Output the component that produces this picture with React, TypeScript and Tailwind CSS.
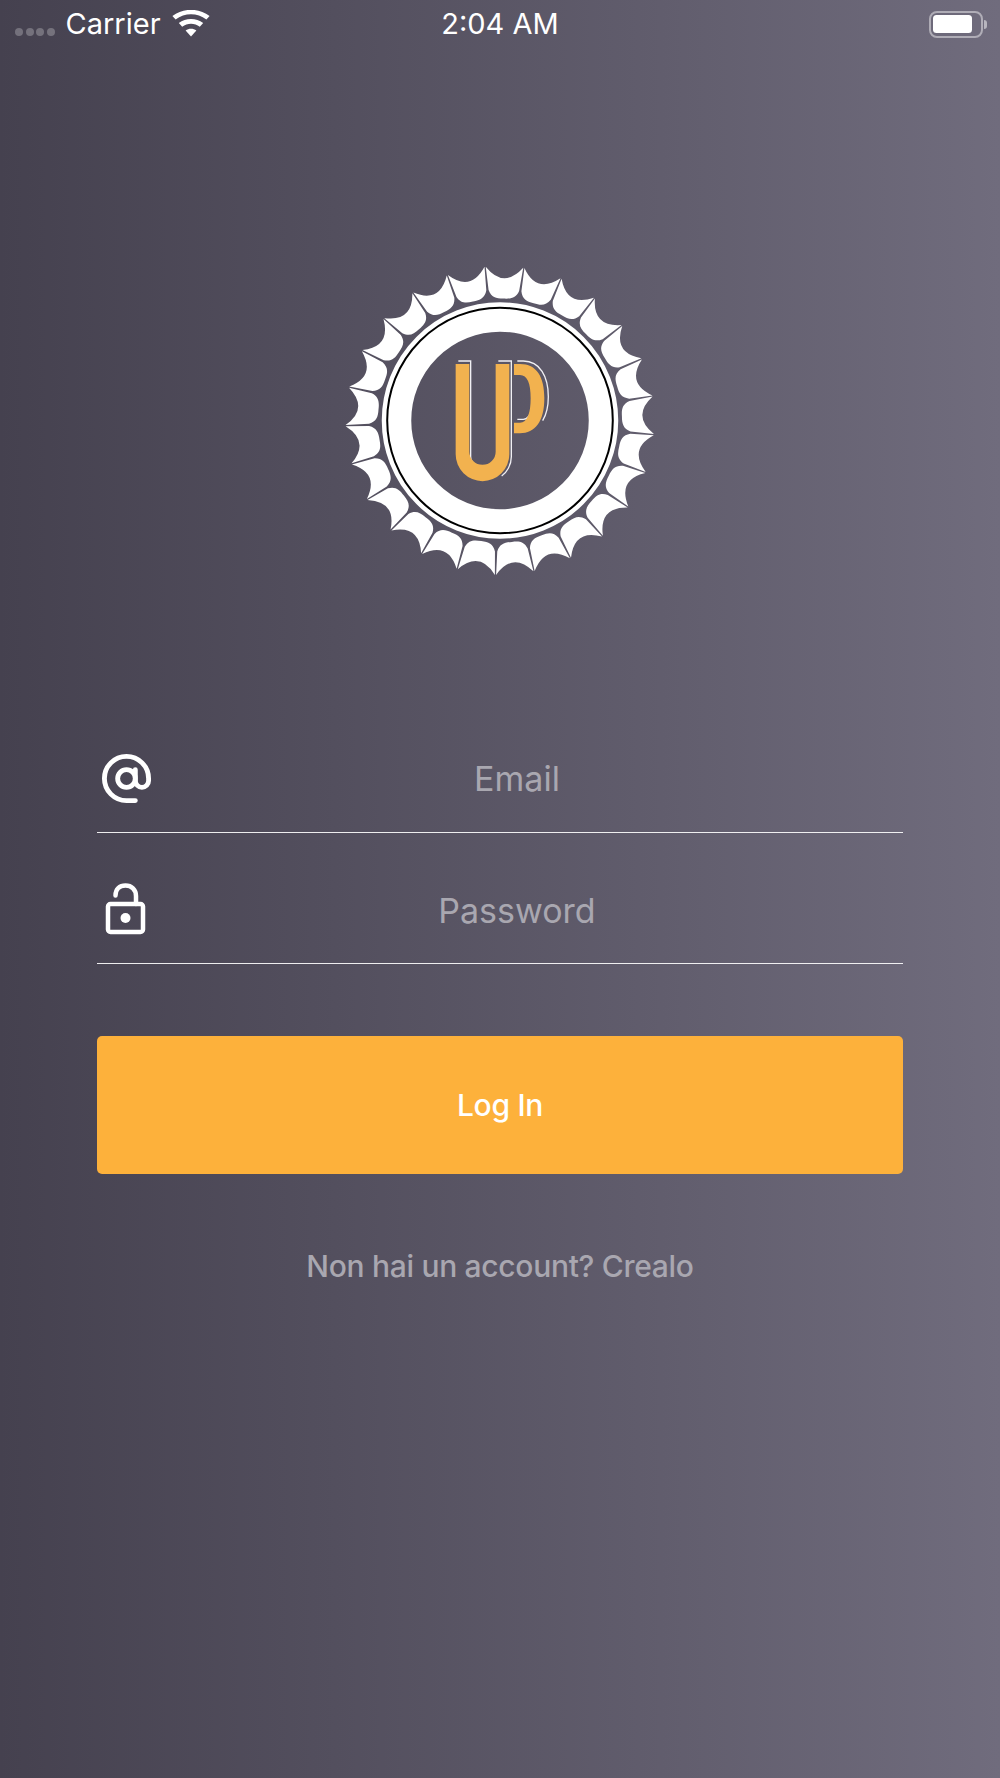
import React from "react";

const CX = 160;
const CY = 160.5;
const pt = (r: number, deg: number) => {
  const a = (deg * Math.PI) / 180;
  return `${(CX + r * Math.sin(a)).toFixed(2)} ${(CY - r * Math.cos(a)).toFixed(2)}`;
};

const scallops = Array.from({ length: 25 }, (_, i) => {
  const s = -5.6 + i * 14.4;
  const m = s + 7.2;
  const e = s + 14.4;
  return [
    `M${pt(154.5, s + 0.3)}`,
    `Q${pt(131.5, m)} ${pt(154.5, e - 0.15)}`,
    `L${pt(131, e - 0.4)}`,
    `C${pt(123.5, e - 1.4)} ${pt(122, m + 3.5)} ${pt(122, m)}`,
    `C${pt(122, m - 3.5)} ${pt(123.5, s + 1.6)} ${pt(131, s + 0.6)}`,
    "Z",
  ].join(" ");
}).join(" ");

function Logo() {
  return (
    <svg width="320" height="320" viewBox="0 0 320 320" className="block">
      <path d={scallops} fill="#fff" />
      <circle cx={CX} cy={CY} r={103.5} fill="none" stroke="#fff" strokeWidth={29.5} />
      <circle cx={CX} cy={CY} r={112.8} fill="none" stroke="#000" strokeWidth={2} />
      <g transform="translate(100 90) scale(0.3333)">
        <g fill="none" stroke="#f1f0f4" strokeWidth={4}>
          <path d="M55 33H92V320C92 340 112 349 130 349C140 349 155 345 165 335" />
          <path d="M175 33H214V320C214 345 200 368 185 378" />
          <path d="M232 33H250C300 33 325 80 325 140C325 175 318 195 308 212" />
          <path d="M232 208H250C262 208 270 198 274 180" />
        </g>
        <path
          d="M47 42H88V305A39.5 39.5 0 0 0 167 305V42H208V313A80.5 80.5 0 0 1 47 313Z"
          fill="#f2b24f"
        />
        <path
          d="M222 42H240C290 42 313 80 313 145C313 215 285 250 240 250H222V218H240C262 218 272 190 272 145C272 100 262 75 240 75H222Z"
          fill="#f2b24f"
        />
      </g>
    </svg>
  );
}

function AtIcon() {
  return (
    <svg width="53" height="53" viewBox="0 0 24 24" fill="none" stroke="#fff" strokeWidth="2.2" strokeLinecap="round" strokeLinejoin="round" className="block">
      <circle cx="12" cy="12" r="4" />
      <path d="M16 8v5a3 3 0 0 0 6 0v-1a10 10 0 1 0-10 10h4" />
    </svg>
  );
}

function LockIcon() {
  return (
    <svg width="42" height="54" viewBox="0 0 42 54" fill="none" stroke="#fff" strokeWidth="4.5" strokeLinecap="round" strokeLinejoin="round" className="block">
      <rect x="4" y="22" width="35" height="28" rx="2.5" />
      <path d="M11.5 13.5C11.5 7 15.5 3.5 21.5 3.5S32 7.5 32 14V22" />
      <circle cx="21.5" cy="36" r="5" fill="#fff" stroke="none" />
    </svg>
  );
}

function Wifi() {
  return (
    <svg width="38" height="28" viewBox="0 0 38 28" fill="#fff" className="block">
      <path d="M19 26.5L13.6 20.6C16.8 18 21.2 18 24.4 20.6Z" />
      <path d="M10.2 16.8L6.8 13.1C13.8 7.6 24.2 7.6 31.2 13.1L27.8 16.8C22.6 12.8 15.4 12.8 10.2 16.8Z" />
      <path d="M3.6 9.6L0.4 6.1C11.4 -2.3 26.6 -2.3 37.6 6.1L34.4 9.6C25.2 2.6 12.8 2.6 3.6 9.6Z" />
    </svg>
  );
}

function Field({ icon, label, iconClass, textClass }: { icon: React.ReactNode; label: string; iconClass: string; textClass: string }) {
  return (
    <div className="flex h-[101px] items-center border-b border-white/90">
      <div className={iconClass}>{icon}</div>
      <div className={textClass}>{label}</div>
    </div>
  );
}

export default function App() {
  return (
    <div
      className="flex h-[1778px] w-[1000px] flex-col overflow-hidden bg-gradient-to-r from-[#45414f] to-[#706c7d] text-white"
      style={{ fontFamily: '"Inter", "Liberation Sans", sans-serif' }}
    >
      <div className="relative flex h-[48px] items-center pl-[15px] pr-[13px]">
        <div className="mt-[16px] flex gap-[2.5px]">
          <span className="h-[8px] w-[8px] rounded-full bg-white/25" />
          <span className="h-[8px] w-[8px] rounded-full bg-white/25" />
          <span className="h-[8px] w-[8px] rounded-full bg-white/25" />
          <span className="h-[8px] w-[8px] rounded-full bg-white/25" />
        </div>
        <span className="ml-[11px] text-[29px] leading-[48px]">Carrier</span>
        <div className="ml-[11px] -mt-[1px]">
          <Wifi />
        </div>
        <span className="flex-1" />
        <div className="flex items-center gap-[1px]">
          <div className="flex h-[27px] w-[54px] items-center rounded-[8px] border-2 border-white/45 p-[2px]">
            <div className="h-[18px] w-[39px] rounded-[3.5px] bg-white" />
          </div>
          <div className="h-[9px] w-[3px] rounded-r-[3px] bg-white/50" />
        </div>
        <span className="absolute left-0 right-0 top-0 text-center text-[29px] leading-[48px]">2:04 AM</span>
      </div>

      <div className="mt-[212px] flex justify-center">
        <Logo />
      </div>

      <div className="mt-[152px] px-[97px]">
        <Field
          icon={<AtIcon />}
          label="Email"
          iconClass="w-[56px] -mt-[8px] ml-[3px] shrink-0"
          textClass="flex-1 pr-[25px] -mt-[7px] text-center text-[34px] leading-[40px] text-[#a9a7b0]"
        />
        <div className="mt-[30px]">
          <Field
            icon={<LockIcon />}
            label="Password"
            iconClass="w-[56px] -mt-[8px] pl-[7px] shrink-0"
            textClass="flex-1 pr-[22px] -mt-[4px] text-center text-[34px] leading-[40px] text-[#a9a7b0]"
          />
        </div>
        <button className="mt-[72px] flex h-[138px] w-full items-center justify-center rounded-[5px] bg-[#fdb13b] text-[30px] font-medium leading-none tracking-[-0.3px] text-white">
          Log In
        </button>
        <div className="mt-[72px] text-center text-[30px] font-medium leading-[40px] tracking-[-0.3px] text-[#a9a7b0]">
          Non hai un account? Crealo
        </div>
      </div>
    </div>
  );
}
